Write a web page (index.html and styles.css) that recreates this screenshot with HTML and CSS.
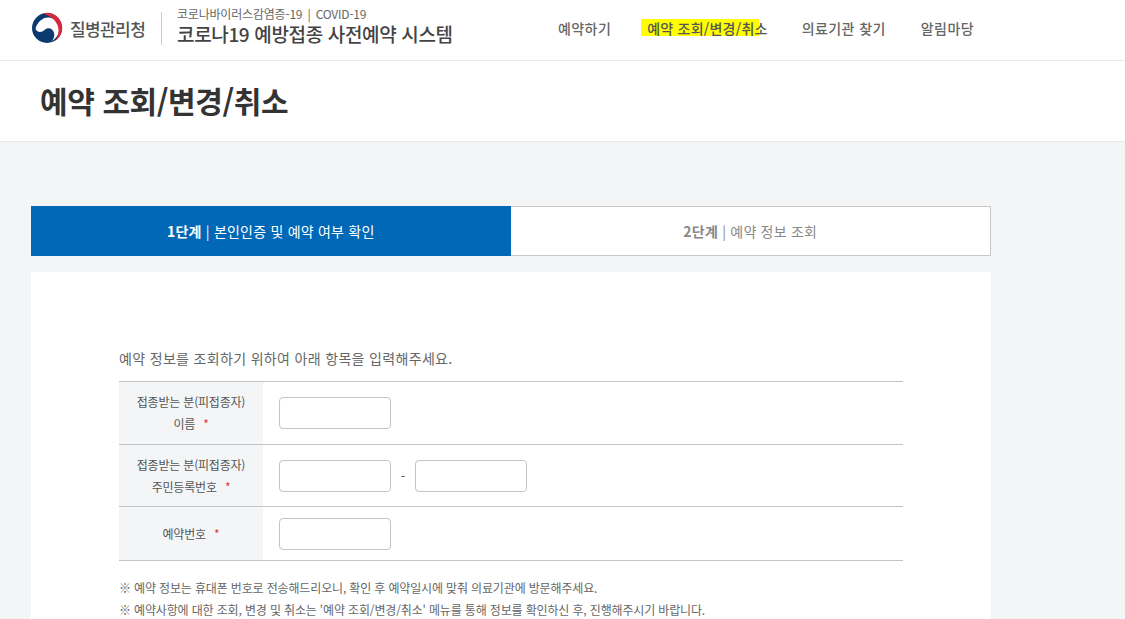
FILE: index.html
```html
<!DOCTYPE html>
<html lang="ko">
<head>
<meta charset="utf-8">
<title>예약 조회/변경/취소</title>
<link rel="stylesheet" href="styles.css">
</head>
<body>
<header class="site-header">
  <div class="brand">
    <svg class="logo" viewBox="0 0 32 32" aria-hidden="true">
      <circle cx="16" cy="16" r="15" fill="#0b3a6e"/>
      <path d="M4.500 17C6 10 12 5 18 5.500 25 6 29 13 28 19c-.5 4-3 7.500-7 10 3-4 3-8.500 0-11.500-2.500-2-5.500-1.500-7.500.5-2.500 2.500-7 3-9-1z" fill="#fff"/>
      <path d="M12 1.500A15 15 0 0 1 24.500 28.400C28 23 28.500 17 26 12 23 6.500 18 3.500 12 1.500z" fill="#d8283f"/>
    </svg>
    <span class="org">질병관리청</span>
    <div class="system">
      <p class="system-sub">코로나바이러스감염증-19 <span class="pipe">|</span> COVID-19</p>
      <p class="system-name">코로나19 예방접종 사전예약 시스템</p>
    </div>
  </div>
  <nav class="nav">
    <a class="nav-item">예약하기</a>
    <a class="nav-item nav-current">예약 조회/변경/취소</a>
    <a class="nav-item">의료기관 찾기</a>
    <a class="nav-item">알림마당</a>
  </nav>
</header>

<section class="title-bar">
  <h1 class="page-title">예약 조회/변경/취소</h1>
</section>

<main class="content">
  <ol class="steps">
    <li class="step step-active"><span><b>1단계</b> | 본인인증 및 예약 여부 확인</span></li>
    <li class="step"><span><b>2단계</b> | 예약 정보 조회</span></li>
  </ol>
  <section class="card">
    <p class="intro">예약 정보를 조회하기 위하여 아래 항목을 입력해주세요.</p>
    <div class="form-table">
      <div class="row row-name">
        <div class="label">접종받는 분(피접종자)<br>이름 <i class="req">*</i></div>
        <div class="field"><input class="input" type="text" aria-label="이름"></div>
      </div>
      <div class="row row-id">
        <div class="label">접종받는 분(피접종자)<br>주민등록번호 <i class="req">*</i></div>
        <div class="field">
          <input class="input" type="text" aria-label="주민등록번호 앞자리">
          <span class="dash">-</span>
          <input class="input" type="text" aria-label="주민등록번호 뒷자리">
        </div>
      </div>
      <div class="row row-no">
        <div class="label">예약번호 <i class="req">*</i></div>
        <div class="field"><input class="input" type="text" aria-label="예약번호"></div>
      </div>
    </div>
    <p class="note">※ 예약 정보는 휴대폰 번호로 전송해드리오니, 확인 후 예약일시에 맞춰 의료기관에 방문해주세요.</p>
    <p class="note">※ 예약사항에 대한 조회, 변경 및 취소는 '예약 조회/변경/취소' 메뉴를 통해 정보를 확인하신 후, 진행해주시기 바랍니다.</p>
  </section>
</main>
</body>
</html>
```

FILE: styles.css
```css
* { box-sizing: border-box; }
html, body { height: 100%; overflow: hidden; }
body {
  margin: 0;
  background: #f4f5f7;
  color: #333;
  font-family: "Noto Sans CJK KR", "Noto Sans", sans-serif;
}
p, h1, ol { margin: 0; padding: 0; }

.site-header {
  height: 61px;
  background: #fff;
  border-bottom: 1px solid #eaeaea;
  display: flex;
  align-items: center;
  padding-left: 31px;
}
.brand { display: flex; align-items: center; width: 527px; flex: none; }
.logo { width: 32px; height: 32px; margin-bottom: 4px; flex: none; }
.org {
  margin-left: 7px;
  width: 91px;
  font-size: 17px;
  font-weight: 500;
  color: #555;
  letter-spacing: -0.6px;
  margin-bottom: 3px;
  white-space: nowrap;
}
.system {
  border-left: 1px solid #ccc;
  padding-left: 15px;
  height: 33px;
  margin-bottom: 4px;
  display: flex;
  flex-direction: column;
  justify-content: center;
  white-space: nowrap;
}
.system-sub { font-size: 12px; line-height: 16px; color: #666; letter-spacing: -0.2px; margin-top: -5px; }
.pipe { margin: 0 2px; }
.system-name { font-size: 19px; line-height: 24px; font-weight: 500; color: #444; letter-spacing: -0.35px; }

.nav { display: flex; align-items: center; margin-bottom: 5px; white-space: nowrap; }
.nav-item { font-size: 14px; font-weight: 500; color: #666; line-height: 20px; letter-spacing: 0.42px; }
.nav-item + .nav-item { margin-left: 35px; }
.nav-item.nav-current {
  margin-left: 30px;
  padding-left: 6px;
  color: #555;
  letter-spacing: 0.23px;
  background: linear-gradient(#ffff00, #ffff00) no-repeat 0 1px / 118px 17px;
}
.nav-current + .nav-item { margin-left: 34px; }

.title-bar {
  height: 81px;
  background: #fff;
  border-bottom: 1px solid #e6e7e9;
  padding: 0 40px;
  display: flex;
  align-items: center;
}
.page-title { font-size: 30px; font-weight: 700; line-height: 40px; color: #333; letter-spacing: -0.4px; margin-top: -2px; }

.content { padding: 64px 0 0 31px; width: 991px; }
.steps { display: flex; list-style: none; height: 50px; }
.step {
  flex: 1;
  display: flex;
  align-items: center;
  justify-content: center;
  background: #fff;
  border: 1px solid #c8c8c8;
  border-left: 0;
  font-size: 14px;
  letter-spacing: 0.22px;
  color: #888;
  white-space: pre;
}
.step b { font-weight: 700; }
.step-active { background: #0068b7; border: 0; color: #fff; }

.card { background: #fff; margin-top: 16px; padding: 76px 88px 0; height: 400px; }
.intro { font-size: 14px; line-height: 20px; color: #666; letter-spacing: 0.33px; }
.form-table { margin-top: 13px; border-top: 1px solid #c4c4c4; }
.form-table + .note { margin-top: 16px; }
.row { display: flex; border-bottom: 1px solid #c4c4c4; }
.row-name { height: 63px; }
.row-id { height: 62px; }
.row-no { height: 54px; }
.label {
  width: 144px;
  flex: none;
  background: #f4f5f7;
  text-align: center;
  font-size: 12px;
  line-height: 22px;
  color: #555;
  letter-spacing: -0.2px;
  padding-top: 9px;
}
.row-no .label { padding-top: 16px; }
.req { font-style: normal; color: #e03a3a; margin-left: 5px; }
.field { display: flex; align-items: center; padding-left: 16px; }
.input {
  width: 112px;
  height: 32px;
  background: #fff;
  border: 1px solid #c4c4c4;
  border-radius: 4px;
  padding: 0;
}
.dash { width: 24px; text-align: center; font-size: 13px; color: #555; }
.note { font-size: 12px; line-height: 22px; color: #666; letter-spacing: -0.15px; white-space: nowrap; }
```
